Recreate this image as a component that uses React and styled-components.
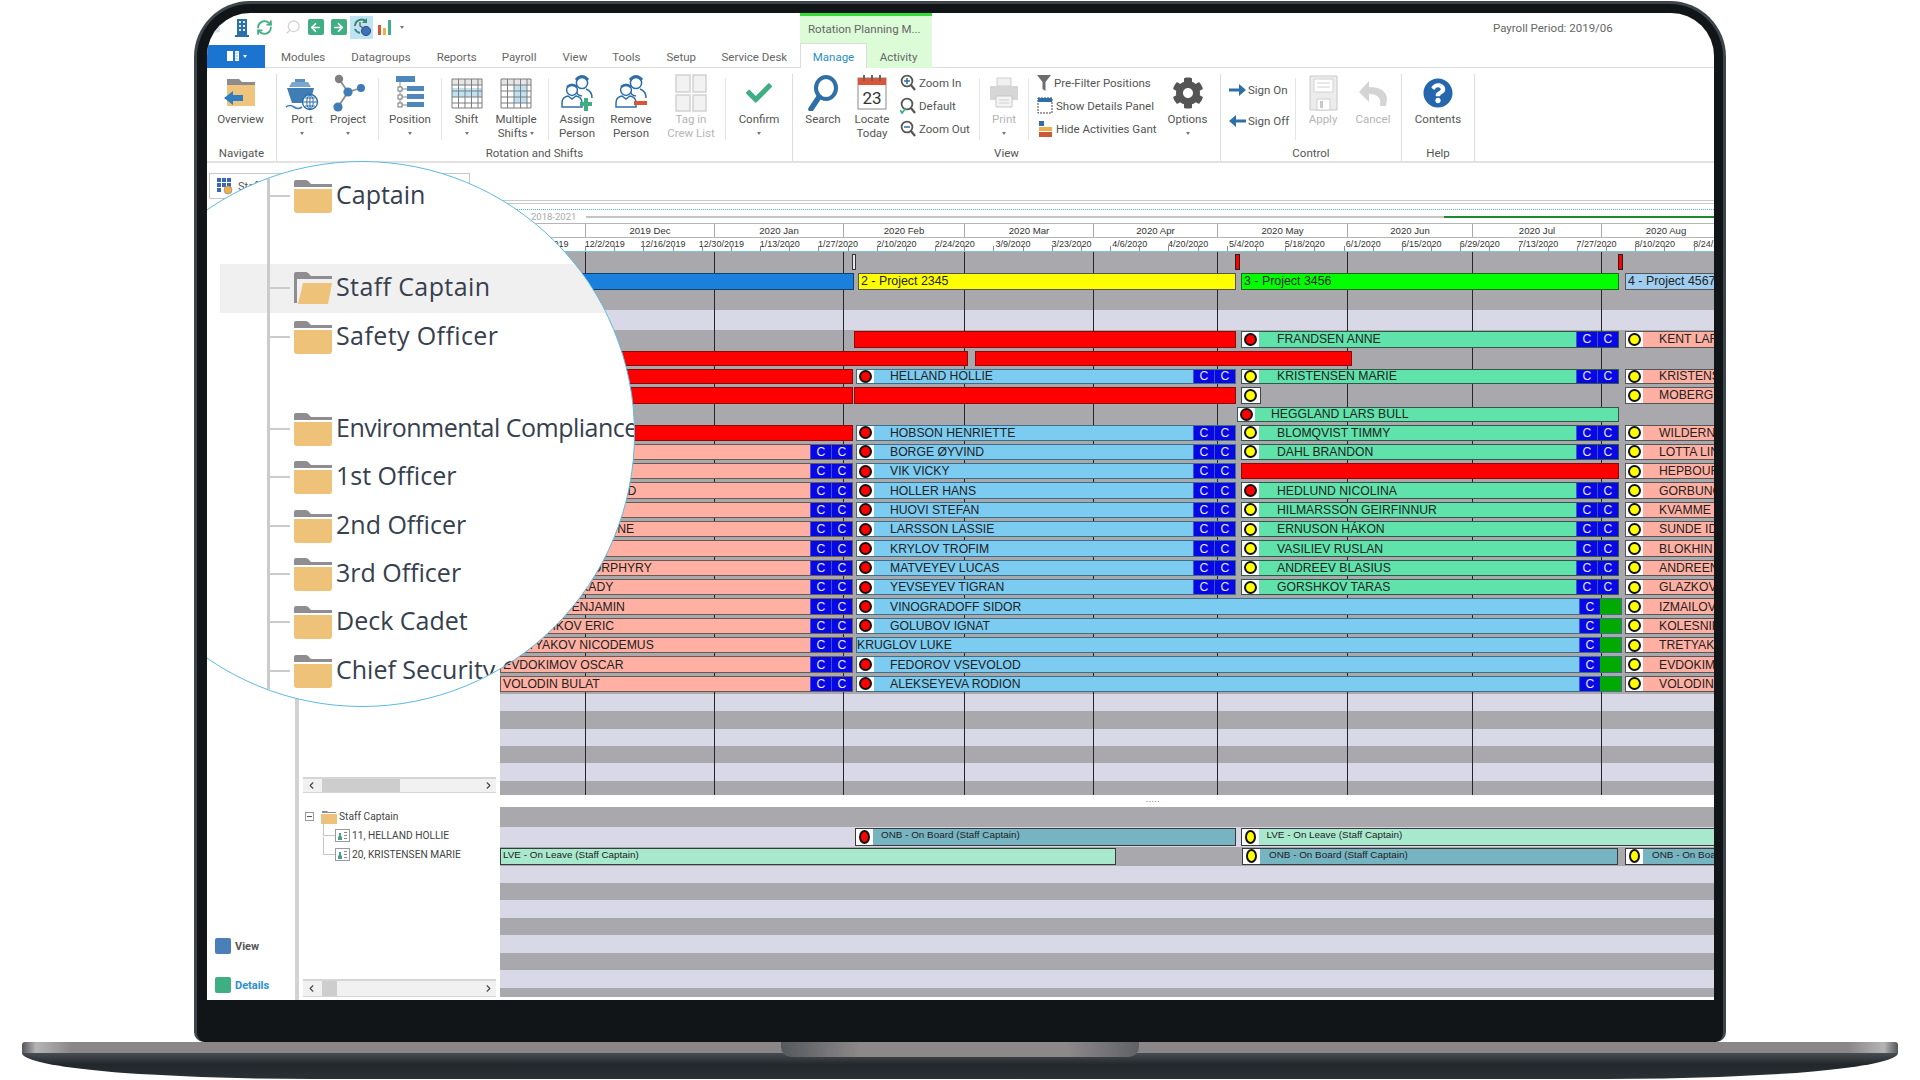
import React from 'react';
import styled, { createGlobalStyle } from 'styled-components';
import { FaCog, FaQuestionCircle, FaCheck } from 'react-icons/fa';
import { RefreshCw, Search, ArrowLeft, ArrowRight, ChevronLeft, ChevronRight } from 'lucide-react';

const Global = createGlobalStyle`
  html, body { margin: 0; padding: 0; background: #fff; width: 1920px; height: 1080px; overflow: hidden; }
  * { box-sizing: border-box; }
  body { font-family: Roboto, "Liberation Sans", sans-serif; }
`;

const Page = styled.div`
  width: 1920px;
  height: 1080px;
  display: flex;
  flex-direction: column;
  align-items: center;
  padding-top: 1px;
`;
const Lid = styled.div`
  width: 1532px;
  height: 1041px;
  background: #111518;
  border: 3px solid #3e464b;
  border-bottom: 0;
  border-radius: 56px 56px 10px 10px;
  padding: 9px 9px 0 10px;
`;
const Screen = styled.div`
  position: relative;
  width: 1507px;
  height: 987px;
  background: #fff;
  border-radius: 43px 43px 0 0;
  overflow: hidden;
  display: flex;
  flex-direction: column;
`;
const Base = styled.div`
  position: relative;
  width: 1876px;
  height: 37px;
  display: flex;
  flex-direction: column;
`;
const Band = styled.div`
  height: 11px;
  flex: none;
  border-radius: 3px 3px 0 0;
  background: linear-gradient(90deg, #55555a 0, #b5b5b5 14px, #8b8688 50px, #8b8688 calc(100% - 50px), #b5b5b5 calc(100% - 14px), #55555a 100%);
`;
const Under = styled.div`
  flex: 1;
  background: linear-gradient(180deg, #474d52 0, #22272c 45%, #2b3036 100%);
  border-radius: 0 0 290px 290px / 0 0 26px 26px;
`;
const Notch = styled.div`
  position: absolute;
  left: 759px;
  top: 0;
  width: 358px;
  height: 15px;
  border-radius: 0 0 10px 10px;
  background: linear-gradient(90deg, #55585c 0, #8d888a 22%, #8d888a 80%, #5f6165 100%);
`;

/* top bar */
const TopBar = styled.div`
  height: 55px;
  flex: none;
  display: flex;
  color: #666;
  font-size: 11.5px;
`;
const TopLeft = styled.div`
  width: 593px;
  display: flex;
  flex-direction: column;
`;
const Quick = styled.div`
  height: 32px;
  display: flex;
  align-items: center;
  padding: 0 0 4px 5px;
`;
const QuickGhost = styled.div`
  width: 18px;
  display: flex;
  align-items: center;
`;
const QuickCell = styled.div`
  width: 23px;
  height: 23px;
  margin-left: ${p => p.$ml || 0}px;
  display: flex;
  align-items: center;
  justify-content: center;
  background: ${p => (p.$on ? '#bfe3f2' : 'transparent')};
`;
const GreenSquare = styled.div`
  width: 16px;
  height: 16px;
  background: #3fae82;
  border-radius: 2px;
  display: flex;
  align-items: center;
  justify-content: center;
`;
const Caret = styled.span`
  display: inline-block;
  width: 0;
  height: 0;
  border-left: 2.5px solid transparent;
  border-right: 2.5px solid transparent;
  border-top: 3px solid ${p => p.$c || '#777'};
  vertical-align: middle;
  margin-left: ${p => p.$ml ?? 3}px;
`;
const TabRow = styled.div`
  height: 23px;
  display: flex;
  align-items: center;
  border-bottom: 1px solid #ddd;
  padding-top: 1px;
`;
const FileBtn = styled.div`
  width: 58px;
  height: 23px;
  margin-top: -1px;
  background: #1b74cf;
  display: flex;
  align-items: center;
  justify-content: center;
  gap: 3px;
`;
const Tab = styled.div`
  margin-left: ${p => p.$ml}px;
  white-space: nowrap;
`;
const Context = styled.div`
  width: 132px;
  background: #dcfcd8;
  border-top: 3px solid #35dc35;
  display: flex;
  flex-direction: column;
`;
const ContextTitle = styled.div`
  height: 29px;
  padding: 6px 0 0 8px;
  white-space: nowrap;
`;
const ContextTabs = styled.div`
  height: 23px;
  display: flex;
  align-items: center;
`;
const ManageTab = styled.div`
  width: 67px;
  height: 25px;
  margin-top: -2px;
  padding-top: 2px;
  background: #fff;
  color: #2a8fc6;
  border: 1px solid #ddd;
  border-bottom: 0;
  display: flex;
  align-items: center;
  justify-content: center;
`;
const ActivityTab = styled.div`
  width: 63px;
  padding-top: 1px;
  text-align: center;
`;
const TopRight = styled.div`
  flex: 1;
  border-bottom: 1px solid #ddd;
  padding: 8px 0 0 561px;
  white-space: nowrap;
  height: 55px;
`;

/* ribbon */
const Ribbon = styled.div`
  height: 95px;
  flex: none;
  display: flex;
  border-bottom: 2px solid #e2e2e2;
  color: #555;
  font-size: 11.5px;
`;
const Group = styled.div`
  width: ${p => p.$w}px;
  flex: none;
  display: flex;
  flex-direction: column;
  border-right: 1px solid #ddd;
  margin-top: 6px;
`;
const GroupItems = styled.div`
  flex: 1;
  display: flex;
`;
const GroupLabel = styled.div`
  height: 15px;
  text-align: center;
  line-height: 14px;
`;
const BigBtn = styled.div`
  width: ${p => p.$w}px;
  flex: none;
  display: flex;
  flex-direction: column;
  align-items: center;
  line-height: 14px;
  color: ${p => (p.$dim ? '#b5b5b5' : 'inherit')};
`;
const BigIcon = styled.div`
  height: 38px;
  display: flex;
  align-items: center;
  justify-content: center;
`;
const Sep = styled.div`
  width: 1px;
  height: 62px;
  margin: 4px 0 0 ${p => p.$ml || 0}px;
  background: #e4e4e4;
  flex: none;
`;
const SmallCol = styled.div`
  width: ${p => p.$w}px;
  flex: none;
  display: flex;
  flex-direction: column;
  margin-top: ${p => p.$mt || 0}px;
  padding-left: ${p => p.$pl || 0}px;
  gap: ${p => p.$gap || 0}px;
`;
const SmallBtn = styled.div`
  height: ${p => p.$h || 23}px;
  display: flex;
  align-items: center;
  gap: ${p => p.$gap || 3}px;
  white-space: nowrap;
  padding-left: 1px;
`;

/* body */
const Body = styled.div`
  flex: 1;
  min-height: 0;
  display: flex;
`;
const LeftCol = styled.div`
  width: 293px;
  flex: none;
  display: flex;
  flex-direction: column;
`;
const ToolBox = styled.div`
  width: 261px;
  height: 26px;
  margin: 10px 0 0 2px;
  border: 1px solid #c8c8c8;
  display: flex;
  align-items: center;
  gap: 5px;
  padding-left: 7px;
  font-size: 11px;
  color: #555;
  flex: none;
`;
const LeftPanes = styled.div`
  flex: 1;
  display: flex;
  min-height: 0;
`;
const Nav = styled.div`
  width: 92px;
  flex: none;
  border-right: 4px solid #d2d2d2;
  display: flex;
  flex-direction: column;
  justify-content: flex-end;
  gap: 23px;
  padding: 0 0 7px 8px;
`;
const NavItem = styled.div`
  height: 16px;
  display: flex;
  align-items: center;
  gap: 4px;
  font-size: 11px;
  font-weight: 700;
  color: ${p => p.$text};
`;
const NavSwatch = styled.div`
  width: 16px;
  height: 16px;
  border-radius: 2px;
  background: ${p => p.$c};
`;
const TreePane = styled.div`
  flex: 1;
  min-width: 0;
  display: flex;
  flex-direction: column;
  padding-left: 4px;
`;
const Scroll = styled.div`
  height: ${p => p.$h}px;
  flex: none;
  width: 193px;
  background: #f1f1f1;
  border-top: 2px solid #d5d5d5;
  border-bottom: 1px solid #d5d5d5;
  display: flex;
  align-items: center;
  color: #444;
`;
const ScrollThumb = styled.div`
  width: ${p => p.$w}px;
  height: 100%;
  margin-left: 5px;
  background: #cdcdcd;
`;
const ScrollEnd = styled.div`
  margin-left: auto;
  display: flex;
  margin-right: 2px;
`;
const UpperFill = styled.div`
  height: 578px;
  flex: none;
`;
const LowerTree = styled.div`
  flex: 1;
  padding: 14px 0 0 2px;
  font-size: 10.2px;
  color: #444;
`;
const TreeRow = styled.div`
  position: relative;
  height: 19px;
  display: flex;
  align-items: center;
  gap: 2px;
  padding-left: ${p => p.$pl}px;
  white-space: nowrap;
`;
const Elbow = styled.span`
  position: absolute;
  left: 18px;
  top: -8px;
  width: 12px;
  height: 18px;
  border-left: 1px solid #c4c4c4;
  border-bottom: 1px solid #c4c4c4;
`;
const MinusBox = styled.span`
  width: 9px;
  height: 9px;
  border: 1px solid #999;
  margin-right: 5px;
  background: linear-gradient(#555, #555) center / 5px 1px no-repeat;
  flex: none;
`;
const PersonBox = styled.span`
  width: 15px;
  height: 13px;
  border: 1px solid #9a9a9a;
  display: flex;
  align-items: center;
  justify-content: center;
  flex: none;
`;

/* chart */
const Chart = styled.div`
  flex: 1;
  min-width: 0;
  overflow: hidden;
  display: flex;
  flex-direction: column;
`;
const ChartTop = styled.div`
  height: 37px;
  flex: none;
`;
const Stripes = styled.div`
  height: 4px;
  flex: none;
  border-top: 1px solid #c8c8c8;
  border-bottom: 1px solid #c8c8c8;
  margin-bottom: 5px;
`;
const RangeBar = styled.div`
  height: 14px;
  flex: none;
  border-top: 1px dotted #58b4c8;
  display: flex;
  align-items: center;
  font-size: 9.5px;
  color: #aaa;
  padding-left: 31px;
`;
const RangeLine = styled.div`
  width: ${p => p.$w}px;
  flex: ${p => (p.$w ? 'none' : 1)};
  height: 2px;
  margin-left: ${p => p.$ml || 0}px;
  background: ${p => p.$c};
`;
const MonthRow = styled.div`
  height: 15px;
  flex: none;
  display: flex;
  border-top: 1px solid #b5b5b5;
  border-bottom: 1px solid #b5b5b5;
`;
const MonthCell = styled.div`
  flex: none;
  border-left: 1px solid #aaa;
  text-align: center;
  font-family: "Liberation Sans", sans-serif;
  font-size: 9.6px;
  line-height: 13px;
  color: #333;
`;
const DateRow = styled.div`
  height: 14px;
  flex: none;
  display: flex;
  padding-left: 17.2px;
  border-bottom: 1px solid #7cc4d4;
  overflow: hidden;
`;
const DateCell = styled.div`
  position: relative;
  flex: none;
  width: 58.35px;
  text-align: center;
  font-family: "Liberation Sans", sans-serif;
  font-size: 9px;
  line-height: 13px;
  color: #333;
  white-space: nowrap;
  &::before, &::after {
    content: '';
    position: absolute;
    bottom: 0;
    width: 1px;
    height: 5px;
    background: #8a8a8a;
  }
  &::before { left: 9.5px; }
  &::after { left: 38.7px; }
`;
const Upper = styled.div`
  position: relative;
  flex: none;
`;
const GridLine = styled.div`
  position: absolute;
  top: 0;
  bottom: 0;
  width: 1.3px;
  background: #26262a;
  z-index: 1;
`;
const RowBox = styled.div`
  height: ${p => p.$h}px;
  display: flex;
  align-items: center;
  background: ${p => (p.$light ? '#d8d8e6' : '#a9a9ad')};
`;
const Seg = styled.div`
  position: relative;
  z-index: 2;
  flex: none;
  height: calc(100% - 3px);
  background: ${p => p.$tone};
  border: 1px solid ${p => p.$edge || '#3a3a3a'};
  display: flex;
  align-items: center;
  overflow: hidden;
  white-space: nowrap;
  font-family: "Liberation Sans", sans-serif;
  font-size: 12.2px;
  color: #222;
`;
const ProjectText = styled.span`
  padding-left: 2px;
  font-size: 12.4px;
`;
const DotBox = styled.div`
  width: 17px;
  height: 100%;
  flex: none;
  background: #fff;
  display: flex;
  align-items: center;
  justify-content: center;
`;
const Dot = styled.div`
  width: ${p => p.$w || 13}px;
  height: ${p => p.$t || 13}px;
  flex: none;
  border-radius: 50%;
  border: 2px solid #111;
  background: ${p => p.$c};
`;
const Name = styled.span`
  padding-left: ${p => p.$pl}px;
`;
const Cells = styled.div`
  margin-left: auto;
  display: flex;
  height: 100%;
  flex: none;
`;
const CCell = styled.div`
  width: 21px;
  height: 100%;
  background: ${p => p.$c || '#0808e4'};
  border-left: 1px solid ${p => p.$c || '#3a52d8'};
  color: #e4e8ff;
  font-size: 12.2px;
  display: flex;
  align-items: center;
  justify-content: center;
`;
const Divider = styled.div`
  height: 12px;
  flex: none;
  background: #fff;
  font-size: 9px;
  line-height: 8px;
  text-align: center;
  letter-spacing: 0.5px;
  color: #444;
  padding-left: 92px;
`;
const Activity = styled(Seg)`
  font-size: 9.9px;
  align-items: flex-start;
  height: calc(100% - 2px);
  border-width: 1.5px;
`;
const SmallName = styled.span`
  padding-left: ${p => p.$pl}px;
  line-height: 11px;
`;
const Tail = styled.div`
  height: 3px;
  flex: none;
`;

/* magnifier */
const Lens = styled.div`
  position: absolute;
  z-index: 5;
  left: -118px;
  top: 148px;
  width: 546px;
  height: 546px;
  border-radius: 50%;
  border: 1.5px solid #5db9e3;
  background: #fff;
  overflow: hidden;
  padding-top: 10px;
`;
const LensList = styled.div`
  position: relative;
  margin-left: 130px;
  &::before {
    content: '';
    position: absolute;
    left: 47px;
    top: -20px;
    bottom: -20px;
    width: 3px;
    background: #cbcbcb;
    z-index: 1;
  }
`;
const LensRow = styled.div`
  position: relative;
  height: 48.3px;
  margin-top: ${p => (p.$tall ? 44 : 0)}px;
  display: flex;
  align-items: center;
  background: ${p => (p.$on ? '#f0f0f0' : 'transparent')};
  padding-left: 49px;
  white-space: nowrap;
`;
const Branch = styled.div`
  width: 21px;
  height: 2px;
  background: #cbcbcb;
  margin-right: 3px;
  flex: none;
`;
const FolderBox = styled.div`
  flex: none;
  display: flex;
`;
const LensText = styled.span`
  margin-left: 3px;
  font-family: "Open Sans", Roboto, sans-serif;
  font-size: 25px;
  letter-spacing: ${p => p.$ls || 0}px;
  color: #36404e;
  position: relative;
  top: -2px;
`;

/* drawings */
const FolderBig = ({ open }) => (
  <svg width="40" height="34" viewBox="0 0 40 34">
    <path d="M1 8V3q0-2 2-2h10q2 0 4 3l1 1h21v3z" fill="#8f8d92" />
    {open ? (
      <>
        <path d="M1 8h3v24H1z" fill="#8f8d92" />
        <path d="M10 12h29l-4 21H5z" fill="#efc27a" />
      </>
    ) : (
      <path d="M1 10h38v21q0 3-3 3H4q-3 0-3-3z" fill="#efc27a" />
    )}
  </svg>
);
const FolderSmall = () => (
  <svg width="16" height="14" viewBox="0 0 16 14">
    <path d="M1 3V1h5l1 1h8v1z" fill="#8f8d92" />
    <path d="M0 4h16v10H0z" fill="#efc27a" />
  </svg>
);
const MiniPeople = () => (
  <svg width="11" height="9" viewBox="0 0 11 9">
    <path d="M1 9V6l1-1V2h2v3l1 1v3z" fill="#4f9e8a" />
    <path d="M7 1h3v1H7zM7 4h3v1H7zM7 7h3v1H7z" fill="#888" />
  </svg>
);
const OverviewIcon = () => (
  <svg width="36" height="30" viewBox="0 0 36 30">
    <path d="M4 1h12l3 3h13v3H4z" fill="#8c8c8c" />
    <path d="M4 7h28v21H4z" fill="#f0c47c" />
    <path d="M1 20l9-7v4h10v6H10v4z" fill="#2f7ec0" />
  </svg>
);
const PortIcon = () => (
  <svg width="34" height="38" viewBox="0 0 34 38">
    <path d="M10 5h10v4H10z" fill="#5a8fc0" />
    <path d="M7 8h16l3 5H4z" fill="#7ba7cf" />
    <path d="M2 14h27l-4 15H7z" fill="#3f7db4" />
    <path d="M1 33q4-3 8 0t8 0" fill="none" stroke="#3f7db4" strokeWidth="1.6" />
    <circle cx="25" cy="28" r="7.5" fill="#fff" stroke="#2f6fa8" strokeWidth="1.4" />
    <path d="M18 28h14M25 21v14M20 24h10M20 32h10" stroke="#2f6fa8" strokeWidth="1" />
    <ellipse cx="25" cy="28" rx="3.2" ry="7" fill="none" stroke="#2f6fa8" strokeWidth="1" />
  </svg>
);
const ProjectIcon = () => (
  <svg width="34" height="38" viewBox="0 0 34 38">
    <path d="M8 5l9 13L7 33M17 18l13-4" stroke="#8a8a8a" strokeWidth="1.8" fill="none" />
    <circle cx="8" cy="5" r="4.2" fill="#7f7f82" />
    <circle cx="17" cy="18" r="4.6" fill="#3f7db4" />
    <circle cx="30" cy="14" r="4" fill="#3f7db4" />
    <circle cx="7" cy="33" r="4.6" fill="#3f7db4" />
  </svg>
);
const PositionIcon = () => (
  <svg width="30" height="36" viewBox="0 0 30 36">
    <path d="M1 1h19v6H1z" fill="#4f86bb" />
    <path d="M5 7v24M5 14h7M5 22h7M5 30h7" stroke="#888" fill="none" />
    <rect x="3" y="12" width="4" height="4" fill="#fff" stroke="#777" />
    <rect x="3" y="20" width="4" height="4" fill="#fff" stroke="#777" />
    <rect x="3" y="28" width="4" height="4" fill="#fff" stroke="#777" />
    <path d="M12 11h17v5H12zM12 19h17v5H12zM12 27h17v5H12z" fill="#4f86bb" />
  </svg>
);
const GridIcon = ({ multi }) => {
  const xs = [1, 7.5, 14, 20.5, 27, 31];
  const ys = [1, 7, 13, 19, 25, 30];
  return (
    <svg width="32" height="31" viewBox="0 0 32 31">
      {multi ? <path d="M14 7h13v18H14z" fill="#bfe2f2" /> : <path d="M1 10h30v9H1z" fill="#bfe2f2" />}
      <path d="M1 1h30v6H1z" fill="#e6e6e6" />
      {xs.map(x => <path key={x} d={`M${x} 1v29`} stroke="#7d7d7d" strokeWidth="1" />)}
      {ys.map(y => <path key={y} d={`M1 ${y}h30`} stroke="#7d7d7d" strokeWidth="1" />)}
    </svg>
  );
};
const PersonIcon = ({ minus }) => (
  <svg width="34" height="38" viewBox="0 0 34 38">
    <g fill="none" stroke="#2f6fa8" strokeWidth="1.5">
      <circle cx="22" cy="9" r="5.6" />
      <path d="M16 6q6-7 12 0" strokeWidth="3" />
      <path d="M17 17q-1 4 5 5M26 15q6 2 6 9" />
      <circle cx="12" cy="16" r="5.4" fill="#fff" />
      <path d="M7 13q5-4 10 0" strokeWidth="2.4" />
      <path d="M2 33v-4q0-6 6-7l4 3 4-3q6 1 6 7v4z" fill="#fff" />
    </g>
    {minus ? (
      <path d="M20 27h13v4H20z" fill="#d8553a" />
    ) : (
      <path d="M24 24h4v4h4v4h-4v5h-4v-5h-4v-4h4z" fill="#3fae82" />
    )}
  </svg>
);
const TagIcon = () => (
  <svg width="32" height="38" viewBox="0 0 32 38">
    <g fill="#f2f2f2" stroke="#cfcfcf" strokeWidth="1.4">
      <rect x="1" y="1" width="14" height="17" />
      <rect x="18" y="1" width="13" height="17" />
      <rect x="1" y="21" width="14" height="16" />
      <rect x="18" y="21" width="13" height="16" />
    </g>
  </svg>
);
const LensIcon = ({ color = '#2f6fa8', size = 30, sw = 4 }) => (
  <svg width={size} height={size + 6} viewBox="0 0 30 36">
    <ellipse cx="18" cy="13" rx="10" ry="11" fill="#fff" stroke={color} strokeWidth={sw} />
    <path d="M11 22L3 34" stroke={color} strokeWidth={sw + 1.5} strokeLinecap="round" />
  </svg>
);
const CalendarIcon = () => (
  <svg width="30" height="36" viewBox="0 0 30 36">
    <rect x="1" y="3" width="28" height="31" fill="#fff" stroke="#8a8a8a" />
    <path d="M1 3h28v7H1z" fill="#d8553a" />
    <path d="M7 0v6M15 0v6M23 0v6" stroke="#666" strokeWidth="2" />
    <text x="15" y="29" textAnchor="middle" fontSize="17" fontFamily="Roboto, sans-serif" fill="#333">23</text>
  </svg>
);
const ZoomIcon = ({ mark }) => (
  <svg width="16" height="18" viewBox="0 0 16 18">
    <circle cx="7" cy="7" r="5.4" fill="#fff" stroke="#555" strokeWidth="1.8" />
    <path d="M11 11l4 5" stroke="#555" strokeWidth="2.2" />
    {mark === 'in' && <path d="M4 7h6M7 4v6" stroke="#2f6fa8" strokeWidth="1.6" />}
    {mark === 'out' && <path d="M4 7h6" stroke="#2f6fa8" strokeWidth="1.6" />}
    {mark === 'ok' && <path d="M0 13l2 3 4-5" stroke="#3fae82" strokeWidth="1.8" fill="none" />}
  </svg>
);
const PrinterIcon = () => (
  <svg width="30" height="32" viewBox="0 0 30 32">
    <path d="M8 1h14v8H8z" fill="#f0f0f0" stroke="#cfcfcf" />
    <path d="M1 9h28v14H1z" fill="#d6d6d6" />
    <path d="M7 19h16v11H7z" fill="#f4f4f4" stroke="#c8c8c8" />
    <path d="M10 23h10M10 26h10" stroke="#cfcfcf" />
  </svg>
);
const FilterIcon = () => (
  <svg width="14" height="18" viewBox="0 0 14 18">
    <path d="M0 1h14L8.5 8v9L5.5 15V8z" fill="#6d6d6d" />
  </svg>
);
const DetailsIcon = () => (
  <svg width="16" height="18" viewBox="0 0 16 18">
    <rect x="1" y="1" width="14" height="15" fill="#fff" stroke="#444" strokeDasharray="2 1" />
    <path d="M1 1h14v4H1z" fill="#2f6fa8" />
  </svg>
);
const GanttIcon = () => (
  <svg width="16" height="18" viewBox="0 0 16 18">
    <path d="M2 1h5v5H2z" fill="#2f6fa8" />
    <path d="M2 7h13v4H2z" fill="#efb04a" />
    <path d="M2 12h13v5H2z" fill="#cc5a3a" />
  </svg>
);
const SignArrow = ({ back }) => (
  <svg width="17" height="16" viewBox="0 0 17 16" style={back ? { transform: 'scaleX(-1)' } : undefined}>
    <path d="M0 6.5h10V2l7 6-7 6V9.500H0z" fill="#2f6fa8" />
  </svg>
);
const FloppyIcon = () => (
  <svg width="29" height="36" viewBox="0 0 29 36">
    <path d="M1 1h27v34H1z" fill="#ececec" stroke="#c8c8c8" />
    <path d="M5 4h19v13H5z" fill="#fff" stroke="#d2d2d2" />
    <path d="M8 8h13M8 12h13" stroke="#d2d2d2" />
    <path d="M8 24h13v11H8z" fill="#fff" stroke="#cfcfcf" />
    <path d="M11 26h3v7h-3z" fill="#c8c8c8" />
  </svg>
);
const UndoIcon = () => (
  <svg width="30" height="30" viewBox="0 0 30 30">
    <path d="M1 14L11 3v6q17 0 18 12l-1 7h-6q2-12-11-12v8z" fill="#d4d4d4" />
  </svg>
);
const BookIcon = () => (
  <svg width="14" height="12" viewBox="0 0 14 12">
    <path d="M1 1h12v10H1z" fill="#fff" />
    <path d="M8 1v10" stroke="#1b74cf" strokeWidth="2" />
    <path d="M9 3h3M9 6h3M9 9h3" stroke="#9cc4ec" />
  </svg>
);
const BuildingIcon = () => (
  <svg width="14" height="19" viewBox="0 0 14 19">
    <path d="M2 1h10v16H2z" fill="#2f6fa8" />
    <path d="M0 17h14v2H0z" fill="#2f6fa8" />
    <path d="M4 3h2v2H4zM8 3h2v2H8zM4 7h2v2H4zM8 7h2v2H8zM4 11h2v2H4zM8 11h2v2H8z" fill="#dcebf7" />
  </svg>
);
const GhostIcon = () => (
  <svg width="9" height="14" viewBox="0 0 9 14">
    <path d="M1 3l7-2v11l-7 1z" fill="#d6e2ea" />
  </svg>
);
const SyncClockIcon = () => (
  <svg width="20" height="20" viewBox="0 0 20 20">
    <path d="M3 9a6.500 6.500 0 0 1 11-4.500" fill="none" stroke="#3a8a6e" strokeWidth="2" />
    <path d="M15 1v5h-5z" fill="#3a8a6e" />
    <path d="M3 12a6.500 6.500 0 0 0 5 4" fill="none" stroke="#3a8a6e" strokeWidth="2" />
    <path d="M8 5v4l3 2" fill="none" stroke="#555" strokeWidth="1.2" />
    <circle cx="14" cy="14" r="4.600" fill="#3f6fb4" stroke="#2a4f88" />
  </svg>
);
const ChartSmall = () => (
  <svg width="16" height="18" viewBox="0 0 16 18">
    <path d="M1 7h3v10H1z" fill="#d8553a" />
    <path d="M6 10h3v7H6z" fill="#efb04a" />
    <path d="M11 2h3v15h-3z" fill="#3fae82" />
  </svg>
);
const GridSmall = () => (
  <svg width="16" height="17" viewBox="0 0 16 17">
    <path d="M0 0h4v4H0zM5 0h4v4H5zM10 0h4v4h-4zM0 5h4v4H0zM5 5h4v4H5zM10 5h4v4h-4zM0 10h4v4H0z" fill="#3a66b4" />
    <circle cx="11" cy="12" r="4" fill="#efb04a" stroke="#888" strokeWidth="0.6" />
  </svg>
);

/* data */
const X0 = 500;
const months = [
  ['', 500, 585], ['2019 Dec', 585, 714], ['2020 Jan', 714, 843], ['2020 Feb', 843, 964], ['2020 Mar', 964, 1093],
  ['2020 Apr', 1093, 1217], ['2020 May', 1217, 1347], ['2020 Jun', 1347, 1472], ['2020 Jul', 1472, 1601], ['2020 Aug', 1601, 1730],
];
const dates = ['11/18/2019', '12/2/2019', '12/16/2019', '12/30/2019', '1/13/2020', '1/27/2020', '2/10/2020', '2/24/2020', '3/9/2020', '3/23/2020',
  '4/6/2020', '4/20/2020', '5/4/2020', '5/18/2020', '6/1/2020', '6/15/2020', '6/29/2020', '7/13/2020', '7/27/2020', '8/10/2020', '8/24/2020'];

const SALMON = '#ffb0a2';
const SKY = '#7ccbf0';
const MINT = '#5fe3ab';
const RED = '#ff0000';
const YEL = '#ffff00';

const red = (from, to) => ({ from, to, tone: RED, edge: '#8a0a0a' });
const left = name => ({ from: 500, to: 853, tone: SALMON, name, cells: 'cc', pl: 2, edge: '#6b5a52' });
const mid = (name, dot = RED) => ({ from: 856, to: 1236, tone: SKY, name, dot, cells: 'cc', edge: '#3f6f88' });
const midLong = (name, dot = RED) => ({ from: 856, to: 1622, tone: SKY, name, dot, cells: 'cg', edge: '#3f6f88', pl: dot ? 16 : 0 });
const right = (name, dot = YEL) => ({ from: 1241, to: 1619, tone: MINT, name, dot, cells: 'cc', edge: '#33584a', pl: 18 });
const far = name => ({ from: 1625, to: 1730, tone: SALMON, name, dot: YEL, edge: '#555' });

const rows = [
  { h: 19, segs: [{ from: 852, to: 856, tone: '#e8e8e8', edge: '#333' }, { from: 1234.5, to: 1240, tone: RED, edge: '#222' }, { from: 1618, to: 1623, tone: RED, edge: '#222' }] },
  { h: 20, segs: [{ from: 500, to: 853.5, tone: '#1a80dc', edge: '#14406e' }, { from: 858, to: 1235.5, tone: YEL, text: '2 - Project 2345', edge: '#555' }, { from: 1241, to: 1619, tone: '#00ff00', text: '3 - Project 3456', edge: '#1b6b1b' }, { from: 1625, to: 1730, tone: '#a0cdf0', text: '4 - Project 4567', edge: '#555' }] },
  { h: 19, segs: [] },
  { h: 19.5, light: true, segs: [] },
  { h: 19.5, segs: [red(854, 1235.5), right('FRANDSEN ANNE', RED), far('KENT LARS')] },
  { h: 18, segs: [red(500, 968), red(975, 1352)] },
  { h: 18.5, segs: [red(500, 853), mid('HELLAND HOLLIE'), right('KRISTENSEN MARIE'), far('KRISTENSEN MARIE')] },
  { h: 19.5, segs: [red(500, 853), red(854, 1235.5), { from: 1241, to: 1261, tone: '#fff', dot: YEL, edge: '#444' }, far('MOBERG TOR')] },
  { h: 18, segs: [{ from: 1237, to: 1619, tone: MINT, name: 'HEGGLAND LARS BULL', dot: RED, edge: '#33584a' }] },
  { segs: [red(500, 853), mid('HOBSON HENRIETTE'), right('BLOMQVIST TIMMY'), far('WILDERNESS')] },
  { segs: [left('LOTTA LIND'), mid('BORGE ØYVIND'), right('DAHL BRANDON'), far('LOTTA LIND')] },
  { segs: [left('HEPBOURN KATE'), mid('VIK VICKY'), red(1241, 1619), far('HEPBOURN KATE')] },
  { segs: [left('GORBUNOV LEONARD'), mid('HOLLER HANS'), right('HEDLUND NICOLINA', RED), far('GORBUNOV')] },
  { segs: [left('KVAMME OLE'), mid('HUOVI STEFAN'), right('HILMARSSON GEIRFINNUR'), far('KVAMME OLE')] },
  { segs: [left('SUNDE IDA-KATHRINE'), mid('LARSSON LASSIE'), right('ERNUSON HÁKON'), far('SUNDE IDA-KATHRINE')] },
  { segs: [left('BLOKHIN OLEG'), mid('KRYLOV TROFIM'), right('VASILIEV RUSLAN'), far('BLOKHIN OLEG')] },
  { segs: [left('ANDREENKO PORPHYRY'), mid('MATVEYEV LUCAS'), right('ANDREEV BLASIUS'), far('ANDREENKO')] },
  { segs: [left('GLAZKOV ARKADY'), mid('YEVSEYEV TIGRAN'), right('GORSHKOV TARAS'), far('GLAZKOV')] },
  { segs: [left('IZMAILOV BENJAMIN'), midLong('VINOGRADOFF SIDOR'), far('IZMAILOV')] },
  { segs: [left('KOLESNIKOV ERIC'), midLong('GOLUBOV IGNAT'), far('KOLESNIKOV')] },
  { segs: [left('TRETYAKOV NICODEMUS'), midLong('KRUGLOV LUKE', null), far('TRETYAKOV')] },
  { segs: [left('EVDOKIMOV OSCAR'), midLong('FEDOROV VSEVOLOD'), far('EVDOKIMOV')] },
  { segs: [left('VOLODIN BULAT'), midLong('ALEKSEYEVA RODION'), far('VOLODIN')] },
];
const fillers = [17, 18, 17, 17, 18, 14.4];

const ONB = 'ONB - On Board (Staff Captain)';
const LVE = 'LVE - On Leave (Staff Captain)';
const lowerRows = [
  { h: 20, segs: [] },
  { h: 20, light: true, segs: [
    { from: 855, to: 1236, tone: '#76b4c2', text: ONB, dot: RED, pl: 8 },
    { from: 1240.5, to: 1730, tone: '#a8e9cd', text: LVE, dot: YEL, pl: 8 },
  ] },
  { h: 19, segs: [
    { from: 500, to: 1116, tone: '#a8e9cd', text: LVE, pl: 2 },
    { from: 1242, to: 1618, tone: '#76b4c2', text: ONB, dot: YEL, pl: 9 },
    { from: 1625, to: 1730, tone: '#76b4c2', text: ONB, dot: YEL, pl: 9 },
  ] },
  { h: 17, light: true, segs: [] },
  { h: 17, segs: [] },
  { h: 18, light: true, segs: [] },
  { h: 17, segs: [] },
  { h: 18, light: true, segs: [] },
  { h: 17, segs: [] },
  { h: 18, light: true, segs: [] },
  { h: 9, segs: [] },
];

const lensRows = [
  { name: 'Captain' },
  { name: 'Staff Captain', tall: true, on: true, ls: 0.4 },
  { name: 'Safety Officer', ls: 0.4 },
  { name: 'Environmental Compliance Officer', tall: true, ls: -0.5 },
  { name: '1st Officer' },
  { name: '2nd Officer' },
  { name: '3rd Officer' },
  { name: 'Deck Cadet' },
  { name: 'Chief Security Officer' },
];

const place = segs => {
  let cursor = X0;
  return segs.map(s => {
    const placed = { ...s, ml: s.from - cursor, w: s.to - s.from };
    cursor = s.to;
    return placed;
  });
};

function Bar({ s }) {
  return (
    <Seg $tone={s.tone} $edge={s.edge} style={{ marginLeft: s.ml, width: s.w }}>
      {s.dot && <DotBox><Dot $c={s.dot} /></DotBox>}
      {s.text && <ProjectText>{s.text}</ProjectText>}
      {s.name && <Name $pl={s.pl ?? 16}>{s.name}</Name>}
      {s.cells && (
        <Cells>
          <CCell>C</CCell>
          {s.cells === 'cc' ? <CCell>C</CCell> : <CCell $c="#00aa00" />}
        </Cells>
      )}
    </Seg>
  );
}

function Big({ w, icon, lines, caret, dim }) {
  return (
    <BigBtn $w={w} $dim={dim}>
      <BigIcon>{icon}</BigIcon>
      <div>{lines[0]}</div>
      {lines[1] ? <div>{lines[1]}{caret && <Caret />}</div> : caret && <div><Caret $ml={0} /></div>}
    </BigBtn>
  );
}

function MiniScroll({ h, thumb }) {
  return (
    <Scroll $h={h}>
      <ChevronLeft size={11} strokeWidth={2.4} style={{ marginLeft: 3 }} />
      <ScrollThumb $w={thumb} />
      <ScrollEnd><ChevronRight size={11} strokeWidth={2.4} /></ScrollEnd>
    </Scroll>
  );
}

export default function App() {
  return (
    <Page>
      <Global />
      <Lid>
        <Screen>
          <TopBar>
            <TopLeft>
              <Quick>
                <QuickGhost><GhostIcon /></QuickGhost>
                <QuickCell><BuildingIcon /></QuickCell>
                <QuickCell><RefreshCw size={17} color="#3fae82" strokeWidth={2.6} /></QuickCell>
                <QuickCell $ml={5}><Search size={16} color="#d4d4d4" style={{ transform: 'scaleX(-1)' }} /></QuickCell>
                <QuickCell><GreenSquare><ArrowLeft size={13} color="#fff" strokeWidth={3} /></GreenSquare></QuickCell>
                <QuickCell><GreenSquare><ArrowRight size={13} color="#fff" strokeWidth={3} /></GreenSquare></QuickCell>
                <QuickCell $on><SyncClockIcon /></QuickCell>
                <QuickCell><ChartSmall /></QuickCell>
                <Caret $ml={4} />
              </Quick>
              <TabRow>
                <FileBtn><BookIcon /><Caret $c="#fff" $ml={0} /></FileBtn>
                <Tab $ml={16}>Modules</Tab>
                <Tab $ml={26}>Datagroups</Tab>
                <Tab $ml={26}>Reports</Tab>
                <Tab $ml={25}>Payroll</Tab>
                <Tab $ml={26}>View</Tab>
                <Tab $ml={25}>Tools</Tab>
                <Tab $ml={26}>Setup</Tab>
                <Tab $ml={25.5}>Service Desk</Tab>
              </TabRow>
            </TopLeft>
            <Context>
              <ContextTitle>Rotation Planning M...</ContextTitle>
              <ContextTabs>
                <ManageTab>Manage</ManageTab>
                <ActivityTab>Activity</ActivityTab>
              </ContextTabs>
            </Context>
            <TopRight>Payroll Period: 2019/06</TopRight>
          </TopBar>

          <Ribbon>
            <Group $w={70}>
              <GroupItems>
                <Big w={67} icon={<OverviewIcon />} lines={['Overview']} />
              </GroupItems>
              <GroupLabel>Navigate</GroupLabel>
            </Group>
            <Group $w={516}>
              <GroupItems>
                <Big w={50} icon={<PortIcon />} lines={['Port']} caret />
                <Big w={42} icon={<ProjectIcon />} lines={['Project']} caret />
                <Sep $ml={9} />
                <Big w={62} icon={<PositionIcon />} lines={['Position']} caret />
                <Sep />
                <Big w={49} icon={<GridIcon />} lines={['Shift']} caret />
                <Big w={50} icon={<GridIcon multi />} lines={['Multiple', 'Shifts']} caret />
                <Sep $ml={7} />
                <Big w={56} icon={<PersonIcon />} lines={['Assign', 'Person']} />
                <Big w={52} icon={<PersonIcon minus />} lines={['Remove', 'Person']} />
                <Big w={68} icon={<TagIcon />} lines={['Tag in', 'Crew List']} dim />
                <Sep />
                <Big w={66} icon={<FaCheck size={26} color="#3fae82" />} lines={['Confirm']} caret />
              </GroupItems>
              <GroupLabel>Rotation and Shifts</GroupLabel>
            </Group>
            <Group $w={428}>
              <GroupItems>
                <Big w={60} icon={<LensIcon />} lines={['Search']} />
                <Big w={38} icon={<CalendarIcon />} lines={['Locate', 'Today']} />
                <SmallCol $w={88} $mt={-3} $pl={8}>
                  <SmallBtn><ZoomIcon mark="in" />Zoom In</SmallBtn>
                  <SmallBtn><ZoomIcon mark="ok" />Default</SmallBtn>
                  <SmallBtn><ZoomIcon mark="out" />Zoom Out</SmallBtn>
                </SmallCol>
                <Sep />
                <Big w={48} icon={<PrinterIcon />} lines={['Print']} caret dim />
                <Sep />
                <SmallCol $w={128} $mt={-3} $pl={7}>
                  <SmallBtn><FilterIcon />Pre-Filter Positions</SmallBtn>
                  <SmallBtn><DetailsIcon />Show Details Panel</SmallBtn>
                  <SmallBtn><GanttIcon />Hide Activities Gant</SmallBtn>
                </SmallCol>
                <Big w={61} icon={<FaCog size={32} color="#555" />} lines={['Options']} caret />
              </GroupItems>
              <GroupLabel>View</GroupLabel>
            </Group>
            <Group $w={181}>
              <GroupItems>
                <SmallCol $w={74} $mt={4} $pl={7} $gap={7}>
                  <SmallBtn $gap={2} $h={24}><SignArrow />Sign On</SmallBtn>
                  <SmallBtn $gap={2} $h={24}><SignArrow back />Sign Off</SmallBtn>
                </SmallCol>
                <Sep />
                <Big w={54} icon={<FloppyIcon />} lines={['Apply']} dim />
                <Big w={46} icon={<UndoIcon />} lines={['Cancel']} dim />
              </GroupItems>
              <GroupLabel>Control</GroupLabel>
            </Group>
            <Group $w={73}>
              <GroupItems>
                <Big w={72} icon={<FaQuestionCircle size={30} color="#2566ad" />} lines={['Contents']} />
              </GroupItems>
              <GroupLabel>Help</GroupLabel>
            </Group>
          </Ribbon>

          <Body>
            <LeftCol>
              <ToolBox><GridSmall />Staff</ToolBox>
              <LeftPanes>
                <Nav>
                  <NavItem $text="#555"><NavSwatch $c="#4a7fb8" />View</NavItem>
                  <NavItem $text="#2a8fd0"><NavSwatch $c="#3fae82" />Details</NavItem>
                </Nav>
                <TreePane>
                  <UpperFill />
                  <MiniScroll h={16} thumb={78} />
                  <LowerTree>
                    <TreeRow $pl={0}><MinusBox /><FolderSmall />Staff Captain</TreeRow>
                    <TreeRow $pl={30}><Elbow /><PersonBox><MiniPeople /></PersonBox>11, HELLAND HOLLIE</TreeRow>
                    <TreeRow $pl={30}><Elbow /><PersonBox><MiniPeople /></PersonBox>20, KRISTENSEN MARIE</TreeRow>
                  </LowerTree>
                  <MiniScroll h={18} thumb={15} />
                  <Tail />
                </TreePane>
              </LeftPanes>
            </LeftCol>

            <Chart>
              <ChartTop />
              <Stripes />
              <RangeBar>
                2018-2021
                <RangeLine $w={858} $ml={10} $c="#c4c4c4" />
                <RangeLine $c="#1a8a2a" />
              </RangeBar>
              <MonthRow>
                {months.map(([label, a, b]) => (
                  <MonthCell key={a} style={{ width: b - a }}>{label}</MonthCell>
                ))}
              </MonthRow>
              <DateRow>
                {dates.map(d => <DateCell key={d}>{d}</DateCell>)}
              </DateRow>
              <Upper>
                {months.slice(1).map(([, a]) => <GridLine key={a} style={{ left: a - X0 }} />)}
                {rows.map((r, i) => (
                  <RowBox key={i} $h={r.h || 19.33} $light={r.light}>
                    {place(r.segs).map((s, j) => <Bar key={j} s={s} />)}
                  </RowBox>
                ))}
                {fillers.map((h, i) => <RowBox key={i} $h={h} $light={i % 2 === 0} />)}
              </Upper>
              <Divider>.....</Divider>
              {lowerRows.map((r, i) => (
                <RowBox key={i} $h={r.h} $light={r.light}>
                  {place(r.segs).map((s, j) => (
                    <Activity key={j} $tone={s.tone} style={{ marginLeft: s.ml, width: s.w }}>
                      {s.dot && <DotBox><Dot $c={s.dot} $w={11} $t={14} /></DotBox>}
                      <SmallName $pl={s.pl}>{s.text}</SmallName>
                    </Activity>
                  ))}
                </RowBox>
              ))}
              <Tail />
            </Chart>
          </Body>

          <Lens>
            <LensList>
              {lensRows.map(r => (
                <LensRow key={r.name} $tall={r.tall} $on={r.on}>
                  <Branch />
                  <FolderBox><FolderBig open={r.on} /></FolderBox>
                  <LensText $ls={r.ls}>{r.name}</LensText>
                </LensRow>
              ))}
            </LensList>
          </Lens>
        </Screen>
      </Lid>
      <Base>
        <Band />
        <Under />
        <Notch />
      </Base>
    </Page>
  );
}
